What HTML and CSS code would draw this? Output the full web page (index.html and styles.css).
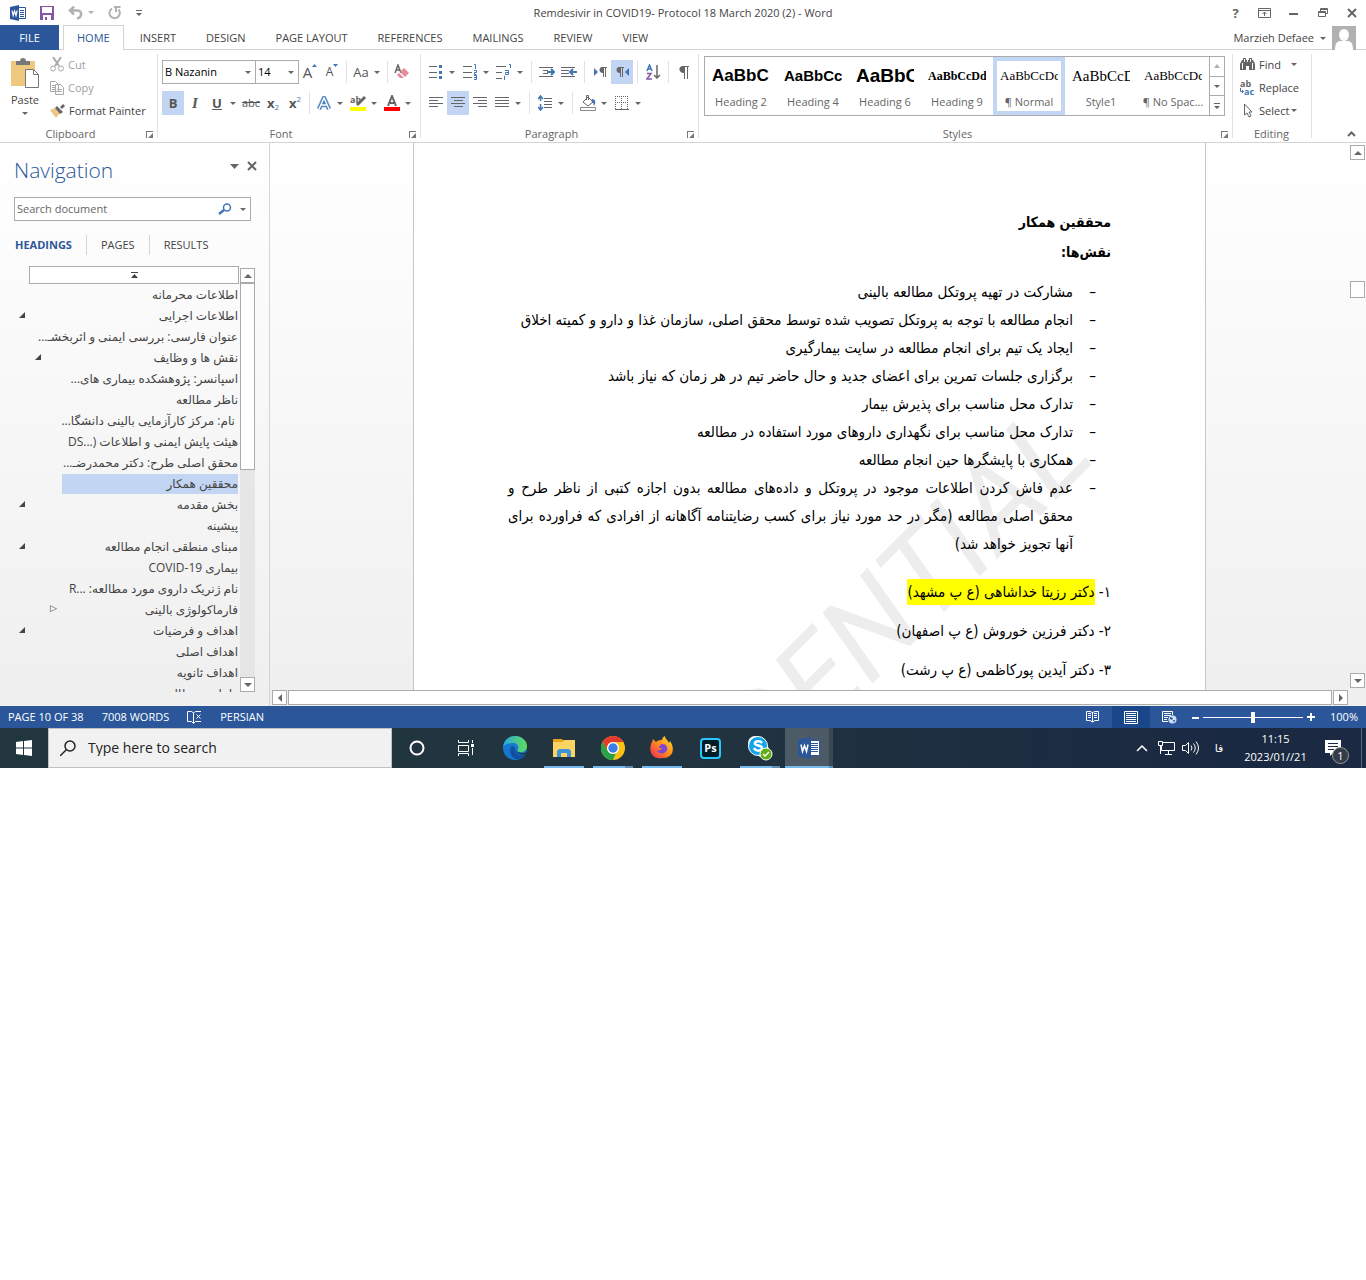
FILE: index.html
```html
<!DOCTYPE html>
<html lang="en">
<head>
    <meta charset="UTF-8">
    <meta name="viewport" content="width=device-width, initial-scale=1.0">
    <title>Remdesivir in COVID19- Protocol 18 March 2020 (2) - Word</title>
    <link rel="stylesheet" href="styles.css">
</head>
<body>
<div class="desktop">
    <header class="titlebar">
        <div class="quick">
            <svg class="word-logo" width="16" height="16" viewBox="0 0 16 16"><path fill="#fff" stroke="#2b579a" d="M8 2.500h7.500v11H8z"/><path stroke="#2b579a" d="M10 5.500h4M10 7.500h4M10 9.500h4M10 11.500h4"/><path fill="#2b579a" d="M0 2l9-2v16l-9-2z"/><path fill="none" stroke="#fff" stroke-width="1.200" d="M2 5.500l1.200 5L4.600 6 6 10.500l1.200-5"/></svg>
            <button class="icon-btn" aria-label="Save"><svg width="14" height="14" viewBox="0 0 14 14"><path fill="#8657a5" d="M0 0h14v14H0z"/><path fill="#fff" d="M2 1h10v6H2zM3 9h8v5H3z"/><path fill="#8657a5" d="M5 11h2v3H5z"/></svg></button>
            <button class="icon-btn undo" aria-label="Undo"><svg width="16" height="14" viewBox="0 0 16 14"><path fill="none" stroke="#b1b1b1" stroke-width="2.500" d="M2 4.500h7c6 0 5 7 0 8M6 .5l-4 4 4 4"/></svg><i class="arrow pale"></i></button>
            <button class="icon-btn" aria-label="Repeat"><svg width="14" height="14" viewBox="0 0 14 14"><path fill="none" stroke="#b1b1b1" stroke-width="2" d="M4 2.500a5.200 5.200 0 1 0 6.500 1M6 1h6.500M8 1v5"/></svg></button>
            <button class="icon-btn" aria-label="Customize toolbar"><svg width="6" height="6" viewBox="0 0 6 6"><path fill="#666" d="M0 0h6v1H0zM0 3h6L3 6z"/></svg></button>
        </div>
        <h1>Remdesivir in COVID19- Protocol 18 March 2020 (2) - Word</h1>
        <div class="window-controls">
            <button aria-label="Help"><b>?</b></button>
            <button aria-label="Ribbon display"><svg width="13" height="10" viewBox="0 0 13 10"><path fill="none" stroke="#666" d="M.5.500h12v9H.500zM1 2.500h11M6.500 8V4M4.500 6l2-2 2 2"/></svg></button>
            <button aria-label="Minimize"><svg width="9" height="10"><path fill="#666" d="M0 5h9v2H0z"/></svg></button>
            <button aria-label="Restore"><svg width="10" height="9" viewBox="0 0 10 9"><path fill="none" stroke="#666" d="M.5 3.500h7v5h-7zM.5 4.500h7M2.500 3V.500h7v5H8M2.500 1.500h7"/></svg></button>
            <button aria-label="Close"><svg width="10" height="10" viewBox="0 0 10 10"><path stroke="#666" stroke-width="2" d="M1 1l8 8M9 1L1 9"/></svg></button>
        </div>
    </header>

    <nav class="ribbon-tabs">
        <button class="file">FILE</button>
        <button class="active">HOME</button>
        <button>INSERT</button>
        <button>DESIGN</button>
        <button>PAGE LAYOUT</button>
        <button>REFERENCES</button>
        <button>MAILINGS</button>
        <button>REVIEW</button>
        <button>VIEW</button>
        <button class="account">Marzieh Defaee <i class="arrow"></i>
            <svg width="24" height="24" viewBox="0 0 24 24"><path fill="#b1b1b1" d="M0 0h24v24H0z"/><ellipse cx="12" cy="9" rx="5" ry="6" fill="#fff"/><path fill="#fff" d="M3 24c0-7 2-9 6-9h6c4 0 6 2 6 9z"/></svg>
        </button>
    </nav>

    <section class="ribbon">
        <div class="group clipboard">
            <div class="group-body">
                <button class="paste">
                    <svg width="28" height="30" viewBox="0 0 28 30"><path fill="#edc87e" d="M0 3h24v25H0z"/><path fill="#777" d="M5 3h4c0-4 6-4 6 0h4v4H5z"/><path fill="#fff" stroke="#777" d="M14.500 11.500h8l5 5v13h-13z"/><path fill="none" stroke="#777" d="M22.500 11.500v5h5"/></svg>
                    <span>Paste</span>
                    <i class="arrow"></i>
                </button>
                <div class="stack">
                    <button class="off"><svg width="14" height="15" viewBox="0 0 14 15"><path fill="none" stroke="#aaa" stroke-width="2" d="M3 0l6 9M11 0L5 9"/><circle cx="3" cy="11.500" r="2.500" fill="none" stroke="#aaa"/><circle cx="11" cy="11.500" r="2.500" fill="none" stroke="#aaa"/></svg>Cut</button>
                    <button class="off"><svg width="14" height="14" viewBox="0 0 14 14"><path fill="#fff" stroke="#aaa" d="M.5.500h5l3 3v7h-8zM2 4.500h3M2 6.500h3M2 8.500h3M5.500 3.500h5l3 3v7h-8zM7 8.500h5M7 10.500h5"/></svg>Copy</button>
                    <button><svg width="15" height="14" viewBox="0 0 15 14"><path fill="#edc87e" d="M0 6l5-2 5 5-4 5z"/><path fill="#666" d="M5 4l2-2 6 6-3 2zM10 3l3-3 2 2-3 3z"/></svg>Format Painter</button>
                </div>
            </div>
            <div class="group-label">Clipboard<button class="launcher" aria-label="Clipboard options"></button></div>
        </div>

        <div class="group font">
            <div class="group-body rows">
                <div class="row">
                    <span class="combo name"><select aria-label="Font"><option>B Nazanin</option></select><i class="arrow"></i></span>
                    <span class="combo size"><select aria-label="Font size"><option>14</option></select><i class="arrow"></i></span>
                    <button class="tool" aria-label="Grow font"><span class="big">A</span><svg class="mark" width="5" height="3"><path fill="#3f77b5" d="M0 3h5L2.500 0z"/></svg></button>
                    <button class="tool" aria-label="Shrink font"><span class="small">A</span><svg class="mark" width="5" height="3"><path fill="#3f77b5" d="M0 0h5L2.500 3z"/></svg></button>
                    <i class="sep"></i>
                    <button class="tool drop" aria-label="Change case"><span>Aa</span><i class="arrow"></i></button>
                    <i class="sep"></i>
                    <button class="tool" aria-label="Clear formatting"><svg width="16" height="16" viewBox="0 0 16 16"><path fill="none" stroke="#666" stroke-width="1.500" d="M1 9l3-8 3 8M2 6h4"/><path fill="#e58b9b" d="M10 4l5 5-4 4-5-5z"/><path fill="#e58b9b" d="M5 9l5 5H6l-3-3z"/></svg></button>
                </div>
                <div class="row">
                    <button class="tool on"><b>B</b></button>
                    <button class="tool"><em>I</em></button>
                    <button class="tool drop"><b><u>U</u></b><i class="arrow"></i></button>
                    <button class="tool"><s>abc</s></button>
                    <button class="tool" aria-label="Subscript"><b>x</b><span class="sub">2</span></button>
                    <button class="tool" aria-label="Superscript"><b>x</b><span class="sup">2</span></button>
                    <i class="sep"></i>
                    <button class="tool drop" aria-label="Text effects"><svg width="14" height="15" viewBox="0 0 14 15"><path fill="none" stroke="#a9c6e8" stroke-width="5" d="M2 13L7 2l5 11M4 9h6"/><path fill="none" stroke="#3f77b5" stroke-width="3.500" d="M2 13L7 2l5 11M4 9h6"/><path fill="none" stroke="#fff" stroke-width="1.500" d="M2 13L7 2l5 11M4 9h6"/></svg><i class="arrow"></i></button>
                    <button class="tool drop" aria-label="Highlight"><svg width="17" height="16" viewBox="0 0 17 16"><text x="0" y="8" class="ico-ab">ab</text><path stroke="#666" stroke-width="3" d="M15 2L7 10"/><path fill="#ff0" d="M0 12h16v4H0z"/></svg><i class="arrow"></i></button>
                    <button class="tool drop" aria-label="Font color"><svg width="16" height="16" viewBox="0 0 16 16"><path fill="none" stroke="#666" stroke-width="2" d="M4 11L8 1l4 10M5 8h6"/><path fill="#f00" d="M0 12h16v4H0z"/></svg><i class="arrow"></i></button>
                </div>
            </div>
            <div class="group-label">Font<button class="launcher" aria-label="Font options"></button></div>
        </div>

        <div class="group para">
            <div class="group-body rows">
                <div class="row">
                    <button class="tool drop" aria-label="Bullets"><svg width="14" height="16"><path stroke="#666" d="M0 2.500h8M0 8.500h8M0 13.500h8"/><path fill="#3f77b5" d="M10 1h3v3h-3zM10 7h3v3h-3zM10 12h3v3h-3z"/></svg><i class="arrow"></i></button>
                    <button class="tool drop" aria-label="Numbering"><svg width="15" height="16"><path stroke="#666" d="M0 2.500h9M0 8.500h9M0 13.500h9"/><path fill="none" stroke="#3f77b5" d="M11 .5h1.500V5M11 6.500h2.500v2H11.500v2h2M11 11.500h2.500v4H11M11 13.500h2"/></svg><i class="arrow"></i></button>
                    <button class="tool drop" aria-label="Multilevel list"><svg width="16" height="16"><path stroke="#666" d="M0 2.500h10M0 8.500h6M0 14.500h6"/><path fill="none" stroke="#3f77b5" d="M13 .5h1.500V4M9 6.500h3.500v4H9.500v-2h3M8.500 12v4"/></svg><i class="arrow"></i></button>
                    <i class="sep"></i>
                    <button class="tool" aria-label="Decrease indent"><svg width="16" height="12"><path stroke="#666" d="M0 1.500h14M4 4.500h5M4 7.500h5M0 10.500h14"/><path fill="none" stroke="#3f77b5" stroke-width="2" d="M8 6h7M12 3l3 3-3 3"/></svg></button>
                    <button class="tool" aria-label="Increase indent"><svg width="16" height="12"><path stroke="#666" d="M0 1.500h14M0 4.500h8M0 7.500h8M0 10.500h14"/><path fill="none" stroke="#3f77b5" stroke-width="2" d="M9 6h7M12 3L9 6l3 3"/></svg></button>
                    <i class="sep"></i>
                    <button class="tool" aria-label="Left to right"><svg width="13" height="10"><path fill="#3f77b5" d="M0 1l4 4-4 4z"/><path fill="#666" d="M8 0h5v1h-1v9h-1V1h-1v9H9V6C4 6 5 0 8 0z"/></svg></button>
                    <button class="tool on" aria-label="Right to left"><svg width="13" height="10"><path fill="#3f77b5" d="M13 1L9 5l4 4z"/><path fill="#666" d="M3 0h5v1H7v9H6V1H5v9H4V6C-1 6 0 0 3 0z"/></svg></button>
                    <i class="sep"></i>
                    <button class="tool" aria-label="Sort"><svg width="15" height="16"><path fill="none" stroke="#3f77b5" stroke-width="1.500" d="M1 7l2.500-6L6 7M2 5h3"/><path fill="none" stroke="#8657a5" stroke-width="1.500" d="M1 9.500h4L1 15h5"/><path fill="none" stroke="#666" stroke-width="1.500" d="M11 1v13M8 11l3 3 3-3"/></svg></button>
                    <i class="sep"></i>
                    <button class="tool" aria-label="Show marks"><svg width="10" height="13"><path fill="#666" d="M4 0h6v1H9v12H8V1H6v12H5V7C-1 7-1 0 4 0z"/></svg></button>
                </div>
                <div class="row">
                    <button class="tool" aria-label="Align left"><svg width="14" height="12"><path stroke="#666" d="M0 .5h14M0 3.500h9M0 6.500h14M0 9.500h9"/></svg></button>
                    <button class="tool on" aria-label="Center"><svg width="14" height="12"><path stroke="#666" d="M0 .5h14M3 3.500h9M0 6.500h14M3 9.500h9"/></svg></button>
                    <button class="tool" aria-label="Align right"><svg width="14" height="12"><path stroke="#666" d="M0 .5h14M5 3.500h9M0 6.500h14M5 9.500h9"/></svg></button>
                    <button class="tool drop" aria-label="Justify"><svg width="14" height="12"><path stroke="#666" d="M0 .5h14M0 3.500h14M0 6.500h14M0 9.500h14"/></svg><i class="arrow"></i></button>
                    <i class="sep"></i>
                    <button class="tool drop" aria-label="Line spacing"><svg width="14" height="16"><path stroke="#666" d="M6 3.500h8M6 6.500h8M6 9.500h8M6 12.500h8"/><path fill="none" stroke="#3f77b5" stroke-width="1.500" d="M2.500 1v5M2.500 9v6M0 4l2.500-3L5 4M0 12l2.500 3L5 12"/></svg><i class="arrow"></i></button>
                    <i class="sep"></i>
                    <button class="tool drop" aria-label="Shading"><svg width="17" height="16"><path fill="#fff" stroke="#666" d="M3 7l5-5 5 5-5 4zM6.500 5V.500h2V5"/><path fill="#3f77b5" d="M12 4c4 0 4 4 2 7-1-2 0-4-3-5z"/><path fill="#fff" stroke="#888" d="M.5 12.500h15v3H.500z"/></svg><i class="arrow"></i></button>
                    <button class="tool drop" aria-label="Borders"><svg width="14" height="14"><path fill="none" stroke="#666" stroke-dasharray="1 1" d="M.5 0v13M12.500 0v13M6.500 0v13M0 .5h13M0 6.500h13"/><path stroke="#666" d="M0 13.500h14"/></svg><i class="arrow"></i></button>
                </div>
            </div>
            <div class="group-label">Paragraph<button class="launcher" aria-label="Paragraph options"></button></div>
        </div>

        <div class="group styles">
            <div class="group-body">
                <div class="gallery">
                    <button><span class="sample h2">AaBbC</span><span>Heading 2</span></button>
                    <button><span class="sample h4">AaBbCc</span><span>Heading 4</span></button>
                    <button><span class="sample h6">AaBbC</span><span>Heading 6</span></button>
                    <button><span class="sample h9">AaBbCcDd</span><span>Heading 9</span></button>
                    <button class="selected"><span class="sample">AaBbCcDd</span><span>¶ Normal</span></button>
                    <button><span class="sample s1">AaBbCcD</span><span>Style1</span></button>
                    <button><span class="sample">AaBbCcDd</span><span>¶ No Spac...</span></button>
                    <div class="gallery-nav">
                        <button aria-label="Previous styles"><i class="arrow up pale"></i></button>
                        <button aria-label="Next styles"><i class="arrow"></i></button>
                        <button aria-label="More styles"><svg width="6" height="6" viewBox="0 0 6 6"><path fill="#666" d="M0 0h6v1H0zM0 3h6L3 6z"/></svg></button>
                    </div>
                </div>
            </div>
            <div class="group-label">Styles<button class="launcher" aria-label="Style options"></button></div>
        </div>

        <div class="group editing">
            <div class="group-body">
                <div class="stack">
                    <button><svg width="15" height="13" viewBox="0 0 15 13"><path fill="#666" d="M2 2h1V0h3v2h1v2h1V2h1V0h3v2h1l2 4v6H9V8H6v4H0V6z"/><path stroke="#fff" d="M2.500 5v6M12.500 5v6M4.500 1v3M10.500 1v3"/></svg>Find <i class="arrow"></i></button>
                    <button><svg width="15" height="16" viewBox="0 0 15 16"><text x="0" y="7" class="ico-ab">ab</text><text x="4" y="15" class="ico-ab blue">ac</text><path fill="none" stroke="#3f77b5" d="M.5 8v3.500H3M2 10l1.500 1.500L2 13"/></svg>Replace</button>
                    <button><svg width="15" height="15" viewBox="0 0 15 15"><path fill="#fff" stroke="#666" d="M4.500 1v11l2.500-2 2 4 2-1-2-4h3z"/></svg>Select<i class="arrow tight"></i></button>
                </div>
            </div>
            <div class="group-label">Editing</div>
        </div>
        <button class="collapse" aria-label="Collapse ribbon"><svg width="9" height="6"><path fill="none" stroke="#666" stroke-width="2" d="M1 5l3.500-3.500L8 5"/></svg></button>
    </section>

    <main class="workspace">
        <aside class="nav-pane">
            <div class="nav-head">
                <h2>Navigation</h2>
                <button aria-label="Pane options"><svg width="9" height="5"><path fill="#666" d="M0 0h9L4.500 5z"/></svg></button>
                <button aria-label="Close pane"><svg width="10" height="10"><path stroke="#666" stroke-width="2" d="M1 1l8 8M9 1L1 9"/></svg></button>
            </div>
            <div class="nav-search">
                <input type="text" placeholder="Search document" aria-label="Search document">
                <svg width="14" height="12" viewBox="0 0 14 12"><circle cx="9" cy="4.500" r="3.500" fill="none" stroke="#3f77b5" stroke-width="1.500"/><path stroke="#3f77b5" stroke-width="2.500" d="M6 7l-5 4"/></svg>
                <i class="arrow"></i>
            </div>
            <div class="nav-tabs">
                <button class="active">HEADINGS</button>
                <button>PAGES</button>
                <button>RESULTS</button>
            </div>
            <div class="nav-body">
                <div class="tree">
                    <button class="jump" aria-label="Jump to the beginning"><svg width="7" height="7"><path fill="#444" d="M0 0h7v1H0zM0 6l3.500-4L7 6z"/></svg></button>
                    <ul dir="rtl" lang="fa">
                        <li>اطلاعات محرمانه</li>
                        <li class="open">اطلاعات اجرایی</li>
                        <li>عنوان فارسی: بررسی ایمنی و اثربخشـ...</li>
                        <li class="open l2">نقش ها و وظایف</li>
                        <li>اسپانسر: پژوهشکده بیماری های...</li>
                        <li>ناظر مطالعه</li>
                        <li>&nbsp;نام: مرکز کارآزمایی بالینی دانشگا...</li>
                        <li>هیئت پایش ایمنی و اطلاعات (...DS</li>
                        <li>محقق اصلی طرح: دکتر محمدرضـ...</li>
                        <li class="selected">محققین همکار</li>
                        <li class="open">بخش مقدمه</li>
                        <li>پیشینه</li>
                        <li class="open">مبنای منطقی انجام مطالعه</li>
                        <li>بیماری COVID-19</li>
                        <li>نام ژنریک داروی مورد مطالعه: ...R</li>
                        <li class="closed">فارماکولوژی بالینی</li>
                        <li class="open">اهداف و فرضیات</li>
                        <li>اهداف اصلی</li>
                        <li>اهداف ثانویه</li>
                        <li>طراحی مطالعه</li>
                    </ul>
                </div>
                <div class="scroll-y">
                    <button aria-label="Scroll up"><i class="arrow up"></i></button>
                    <div class="thumb"></div>
                    <button class="end" aria-label="Scroll down"><i class="arrow"></i></button>
                </div>
            </div>
        </aside>

        <div class="editor">
            <div class="viewport">
                <article class="page" dir="rtl" lang="fa">
                    <div class="watermark" dir="ltr">CONFIDENTIAL</div>
                    <h3>محققین همکار</h3>
                    <h3>نقش‌ها:</h3>
                    <ul class="roles">
                        <li>مشارکت در تهیه پروتکل مطالعه بالینی</li>
                        <li>انجام مطالعه با توجه به پروتکل تصویب شده توسط محقق اصلی، سازمان غذا و دارو و کمیته اخلاق</li>
                        <li>ایجاد یک تیم برای انجام مطالعه در سایت بیمارگیری</li>
                        <li>برگزاری جلسات تمرین برای اعضای جدید و حال حاضر تیم در هر زمان که نیاز باشد</li>
                        <li>تدارک محل مناسب برای پذیرش بیمار</li>
                        <li>تدارک محل مناسب برای نگهداری داروهای مورد استفاده در مطالعه</li>
                        <li>همکاری با پایشگرها حین انجام مطالعه</li>
                        <li>
                            <span class="full">عدم فاش کردن اطلاعات موجود در پروتکل و داده‌های مطالعه بدون اجازه کتبی از ناظر طرح و</span>
                            <span class="full">محقق اصلی مطالعه (مگر در حد مورد نیاز برای کسب رضایتنامه آگاهانه از افرادی که فراورده برای</span>
                            آنها تجویز خواهد شد)
                        </li>
                    </ul>
                    <p class="person">۱- <mark>دکتر رزیتا خداشاهی (ع پ مشهد)</mark></p>
                    <p class="person">۲- دکتر فرزین خوروش (ع پ اصفهان)</p>
                    <p class="person">۳- دکتر آیدین پورکاظمی (ع پ رشت)</p>
                </article>
            </div>
            <div class="scroll-y main">
                <button aria-label="Scroll up"><i class="arrow up"></i></button>
                <div class="thumb"></div>
                <button class="end" aria-label="Scroll down"><i class="arrow"></i></button>
            </div>
            <div class="scroll-x">
                <button aria-label="Scroll left"><i class="arrow left"></i></button>
                <div class="thumb"></div>
                <button aria-label="Scroll right"><i class="arrow right"></i></button>
            </div>
        </div>
    </main>

    <footer class="status">
        <span>PAGE 10 OF 38</span>
        <span>7008 WORDS</span>
        <svg width="15" height="13" viewBox="0 0 15 13"><path fill="none" stroke="#fff" d="M6.500 12V2L4.500.500h-4v10h4l2 2 2-2H14M6.500 2l2-1.500H14M9.500 3.500l4 4M13.500 3.500l-4 4"/></svg>
        <span>PERSIAN</span>
        <div class="views">
            <button aria-label="Read mode"><svg width="14" height="12"><path fill="none" stroke="#fff" d="M6.500 1.500L4 .5H.500v9H4l2.500 1.500L9 9.500h3.500v-9H9zM6.500 1v10M2 2.500h3M2 4.500h3M2 6.500h3M8 2.500h3M8 4.500h3M8 6.500h3"/></svg></button>
            <button class="on" aria-label="Print layout"><svg width="14" height="13"><path fill="none" stroke="#fff" d="M.5.500h13v12H.500zM2 2.500h10M2 4.500h10M2 6.500h10M2 8.500h10M2 10.500h10"/></svg></button>
            <button aria-label="Web layout"><svg width="15" height="13"><path fill="none" stroke="#fff" d="M6 10.500H.500v-10h10V4M2 2.500h7M2 4.500h7M2 6.500h4M2 8.500h3"/><circle cx="10.500" cy="8.500" r="4" fill="#cfe0f5"/><path fill="#2b579a" d="M8 6l3 1-1 2-2-1zM11 9l2 0-1 3z"/></svg></button>
        </div>
        <div class="zoom">
            <button aria-label="Zoom out"><svg width="7" height="7"><path fill="#fff" d="M0 3h7v2H0z"/></svg></button>
            <input type="range" min="0" max="100" value="50" aria-label="Zoom">
            <button aria-label="Zoom in"><svg width="8" height="8"><path fill="#fff" d="M0 3h3V0h2v3h3v2H5v3H3V5H0z"/></svg></button>
        </div>
        <span class="percent">100%</span>
    </footer>

    <div class="taskbar">
        <button class="start" aria-label="Start"><svg width="16" height="16" viewBox="0 0 16 16"><path fill="#fff" d="M0 2l7-1v6.500H0zM8 1l8-1v7.500H8zM0 8.500h7V15l-7-1zM8 8.500h8V16l-8-1z"/></svg></button>
        <label class="task-search">
            <svg width="16" height="16" viewBox="0 0 16 16"><circle cx="10" cy="6" r="5" fill="none" stroke="#222" stroke-width="1.500"/><path stroke="#222" stroke-width="1.500" d="M6.500 9.500L0 16"/></svg>
            <input type="text" placeholder="Type here to search" aria-label="Type here to search">
        </label>
        <div class="apps">
            <button aria-label="Cortana"><svg width="16" height="16"><circle cx="8" cy="8" r="6.500" fill="none" stroke="#fff" stroke-width="2"/></svg></button>
            <button aria-label="Task view"><svg width="16" height="16"><path fill="none" stroke="#fff" d="M.5 0v2.500h10V0M.5 5.500h10v6H.500zM.5 16v-2.500h10V16M14.500 0v3M14.500 8v7"/><path fill="#fff" d="M13 4h3v3h-3z"/></svg></button>
            <button aria-label="Edge"><svg width="24" height="24" viewBox="0 0 24 24"><defs><linearGradient id="edge-top"><stop offset="0" stop-color="#2aa9e0"/><stop offset="1" stop-color="#5fdc5a"/></linearGradient></defs><circle cx="12" cy="12" r="12" fill="#1478d0"/><path fill="url(#edge-top)" d="M0 11C1 4 6 0 12 0c7 0 12 5 12 10 0 4-3 6-6 6-4 0-4-1-3-3 1-3-1-6-5-6C5 7 1 9 0 11z"/><path fill="#1150a0" d="M9 10c-4 3-2 12 5 13.500 4 0 7-2 9-5-5 2-11 0-11-5 0-2-1-3-3-3.500z"/><path fill="#21343f" d="M12.500 12c0 4 5 7 10.500 4v2c-4 2-11 0-10.500-6z"/></svg></button>
            <button class="running" aria-label="File Explorer"><svg width="22" height="18" viewBox="0 0 22 18"><path fill="#e8a317" d="M0 0h9l2 2v3H0z"/><path fill="#fcd462" d="M0 3h9l2-2h11v17H0z"/><path fill="#3f93d8" d="M4 18v-6l2-2h10l2 2v6h-4v-4H8v4z"/></svg></button>
            <button class="running multi" aria-label="Chrome"><svg width="24" height="24" viewBox="0 0 24 24"><circle cx="12" cy="12" r="12" fill="#fbc116"/><path fill="#e33b2e" d="M1.600 6A12 12 0 0 1 22.400 6H12a6 6 0 0 0-5.200 9z"/><path fill="#28a148" d="M1.600 6l5.200 9a6 6 0 0 0 8 2.300L12 24A12 12 0 0 1 1.600 6z"/><circle cx="12" cy="12" r="6" fill="#fff"/><circle cx="12" cy="12" r="4.700" fill="#3b7de9"/></svg></button>
            <button class="running" aria-label="Firefox"><svg width="24" height="24" viewBox="0 0 24 24"><defs><linearGradient id="fox" x1="1" y1="0" x2="0" y2="1"><stop offset="0" stop-color="#ffe226"/><stop offset=".5" stop-color="#ff8a1e"/><stop offset="1" stop-color="#f0245c"/></linearGradient></defs><path fill="url(#fox)" d="M2 6l1-3 3 3c2-2 5-2 6-2 0-2 1-3 3-4 0 3 3 4 4 7l1-2c5 7 4 17-8 17C1 24-2 13 2 6z"/><path fill="#7e45d6" d="M12 8c4 0 6 3 5 6-2 5-9 4-10 0 2 1 4 0 5-2H9c0-2 1-3 3-4z"/></svg></button>
            <button aria-label="Photoshop"><span class="ps">Ps</span></button>
            <button class="running multi" aria-label="Skype"><svg width="26" height="26" viewBox="0 0 26 26"><circle cx="8" cy="8" r="7" fill="#fff"/><circle cx="15" cy="15" r="7" fill="#fff"/><circle cx="11" cy="11" r="9.500" fill="#12a5e8" stroke="#fff"/><path fill="none" stroke="#fff" stroke-width="2.500" d="M15 8c-2-3-8-2-7 1 1 2 7 1 7 4s-6 4-8 0"/><circle cx="19" cy="19" r="6" fill="#5fae12" stroke="#fff"/><path fill="none" stroke="#fff" stroke-width="1.500" d="M16 19l2 2 4-4"/></svg></button>
            <button class="running multi current" aria-label="Word"><svg width="22" height="22" viewBox="0 0 22 22"><path fill="#fff" stroke="#2b579a" d="M11 3.500h10.500v15H11z"/><path stroke="#2b579a" d="M13 6.500h7M13 8.500h7M13 10.500h7M13 12.500h7M13 14.500h7"/><path fill="#2b579a" d="M0 2.500L13 0v22L0 19.500z"/><path fill="none" stroke="#fff" stroke-width="1.500" d="M3 7.500l1.500 7 2-6 2 6 1.500-7"/></svg></button>
        </div>
        <div class="tray">
            <button aria-label="Hidden icons"><svg width="12" height="7"><path fill="none" stroke="#fff" stroke-width="1.500" d="M1 6l5-5 5 5"/></svg></button>
            <button aria-label="Network"><svg width="17" height="14"><path fill="none" stroke="#fff" d="M5 1.500h11.500v8H3.500V5M.5.500h4v4h-4zM2.500 5v8M10.500 10v3M7 13.500h7"/></svg></button>
            <button aria-label="Volume"><svg width="17" height="14"><path fill="none" stroke="#fff" d="M.5 4.500h3l3-3v11l-3-3h-3zM9 4.500q2 2.500 0 5M11.500 2.500q3.500 4.500 0 9M14 .5q5 6.500 0 13"/></svg></button>
            <button class="lang" lang="fa">فا</button>
            <div class="clock"><span>11:15</span><span>2023/01//21</span></div>
            <button class="notes" aria-label="Notifications"><svg width="16" height="16"><path fill="#fff" d="M0 0h16v13H8l-3 3v-3H0z"/><path stroke="#1b2a40" d="M3 3.500h10M3 6.500h10M3 9.500h6"/></svg><span class="badge">1</span></button>
        </div>
    </div>
</div>
</body>
</html>
```
FILE: styles.css
```css
* {
    box-sizing: border-box;
}
body {
    margin: 0;
    background-color: #fff;
    color: #444;
    font-family: "Open Sans", "DejaVu Sans", sans-serif;
    font-size: 11px;
    line-height: 16px;
}
button, input, select {
    margin: 0;
    padding: 0;
    border: none;
    background: none;
    color: inherit;
    font: inherit;
}
button {
    display: flex;
    align-items: center;
    justify-content: center;
    white-space: nowrap;
}
h1, h2, h3, p, ul {
    margin: 0;
    padding: 0;
    font-weight: normal;
}
ul {
    list-style: none;
}
svg {
    display: block;
    flex: none;
}
.desktop {
    display: flex;
    flex-direction: column;
    height: 60vh;
    min-height: 640px;
}
.arrow {
    flex: none;
    border: 3px solid transparent;
    border-top-color: #666;
    border-bottom: none;
}
.arrow.up {
    border-top: none;
    border-bottom: 4px solid #666;
}
.arrow.left {
    border: 4px solid transparent;
    border-right-color: #666;
    border-left: none;
}
.arrow.right {
    border: 4px solid transparent;
    border-left-color: #666;
    border-right: none;
}
.arrow.pale {
    border-top-color: #b1b1b1;
    border-bottom-color: #b1b1b1;
}

/* title bar */
.titlebar {
    display: grid;
    grid-template-columns: 1fr auto 1fr;
    align-items: center;
    height: 25px;
}
.quick {
    display: flex;
    align-items: center;
    gap: 14px;
    height: 22px;
    padding-left: 10px;
}
.undo {
    gap: 4px;
}
.titlebar h1 {
    font-size: 11px;
}
.window-controls {
    display: flex;
    justify-content: flex-end;
    height: 22px;
}
.window-controls button {
    width: 29px;
}
.window-controls b {
    font-size: 13px;
    color: #666;
}

/* ribbon tabs */
.ribbon-tabs {
    display: flex;
    height: 25px;
    border-bottom: 1px solid #d4d4d4;
}
.ribbon-tabs button {
    height: 25px;
    padding: 0 14px;
    border: 1px solid transparent;
    border-bottom: none;
}
.ribbon-tabs .file {
    width: 59px;
    margin-right: 4px;
    background-color: #2b579a;
    color: #fff;
}
.ribbon-tabs .active {
    margin-right: 1px;
    padding: 0 13px;
    border-color: #d4d4d4;
    background-color: #fff;
    color: #2b579a;
}
.ribbon-tabs .account {
    gap: 6px;
    margin-left: auto;
    padding: 0 9px;
}

/* ribbon */
.ribbon {
    display: flex;
    height: 93px;
    padding: 4px 0;
    border-bottom: 1px solid #d4d4d4;
}
.group {
    display: flex;
    flex-direction: column;
    flex: none;
    border-right: 1px solid #e1e1e1;
}
.group-body {
    display: flex;
    flex: 1;
}
.group-label {
    position: relative;
    height: 14px;
    padding-right: 16px;
    line-height: 20px;
    text-align: center;
    color: #666;
}
.launcher {
    position: absolute;
    right: 4px;
    bottom: 0;
    width: 7px;
    height: 7px;
    border-top: 1px solid #777;
    border-left: 1px solid #777;
}
.launcher::after {
    content: "";
    border-left: 5px solid transparent;
    border-bottom: 5px solid #777;
}
.clipboard {
    width: 158px;
}
.paste {
    flex-direction: column;
    justify-content: flex-start;
    gap: 4px;
    width: 50px;
    padding-top: 4px;
}
.stack {
    display: flex;
    flex-direction: column;
    margin-top: -1px;
}
.stack button {
    justify-content: flex-start;
    gap: 4px;
    height: 23px;
}
.stack .off {
    color: #a0a0a0;
}
.rows {
    flex-direction: column;
    gap: 7px;
    padding: 6px 0 0 4px;
}
.row {
    display: flex;
    align-items: center;
    height: 24px;
}
.font {
    width: 263px;
}
.para {
    width: 278px;
}
.combo {
    display: flex;
    align-items: center;
    height: 24px;
    padding-right: 4px;
    border: 1px solid #ababab;
    color: #000;
}
.combo select {
    appearance: none;
    flex: 1;
    padding-left: 2px;
}
.combo.name {
    width: 94px;
}
.combo.size {
    width: 43px;
    border-left: none;
}
.tool {
    position: relative;
    flex: none;
    width: 22px;
    height: 24px;
    font-size: 13px;
    color: #555;
}
.tool.drop {
    width: 34px;
    padding-right: 12px;
}
.tool .arrow {
    position: absolute;
    right: 4px;
    top: 11px;
}
.tool.on {
    background-color: #c2d5f2;
}
.tool em {
    font-family: "Liberation Serif", serif;
    font-size: 15px;
    font-weight: bold;
}
.tool s {
    font-size: 11px;
}
.tool .big {
    font-size: 15px;
}
.tool .small {
    font-size: 12px;
}
.mark {
    align-self: flex-start;
    margin-top: 4px;
}
.tool .sub, .tool .sup {
    padding-top: 8px;
    font-size: 8px;
    color: #3f77b5;
}
.tool .sup {
    padding: 0 0 8px;
}
.sep {
    width: 1px;
    height: 22px;
    margin: 0 3px;
    background-color: #e1e1e1;
}
.para .sep {
    margin: 0 4px;
}
.ico-ab {
    font-size: 9px;
    font-weight: bold;
    fill: #666;
}
.ico-ab.blue {
    fill: #3f77b5;
}
.styles {
    flex: 1;
}
.styles .group-body {
    padding: 2px 7px 0 5px;
}
.gallery {
    display: flex;
    flex: 1;
    height: 60px;
    border: 1px solid #ababab;
}
.gallery > button {
    flex: 1;
    flex-direction: column;
    justify-content: flex-start;
    gap: 6px;
    min-width: 0;
    padding-top: 3px;
    border: 4px solid transparent;
    color: #666;
}
.gallery > .selected {
    border-color: #c2d5f2;
}
.sample {
    width: 58px;
    height: 24px;
    overflow: hidden;
    line-height: 24px;
    text-align: left;
    color: #000;
    font-family: "Liberation Serif", serif;
    font-size: 13px;
}
.sample.h2, .sample.h4, .sample.h6 {
    font-family: "Liberation Sans", sans-serif;
    font-weight: bold;
    font-size: 17px;
}
.sample.h4 {
    font-size: 15px;
}
.sample.h6 {
    font-size: 19px;
}
.sample.h9 {
    font-size: 12px;
    font-weight: bold;
}
.sample.s1 {
    font-size: 15px;
}
.gallery-nav {
    display: flex;
    flex-direction: column;
    width: 15px;
    border-left: 1px solid #ababab;
}
.gallery-nav button {
    flex: 1;
}
.gallery-nav button + button {
    border-top: 1px solid #ababab;
}
.editing {
    width: 79px;
    padding-left: 7px;
}
.editing .group-label {
    padding-right: 8px;
}
.editing .stack .arrow {
    margin-left: 6px;
}
.editing .stack .arrow.tight {
    margin-left: -2px;
}
.collapse {
    align-self: flex-end;
    width: 54px;
    height: 8px;
    padding-left: 24px;
}

/* workspace */
.workspace {
    display: flex;
    flex: 1;
    min-height: 0;
    background: linear-gradient(#fff, #efefef);
}
.nav-pane {
    display: flex;
    flex-direction: column;
    width: 270px;
    padding: 12px 14px 14px;
    border-right: 1px solid #d4d4d4;
}
.nav-head {
    display: flex;
    align-items: center;
    gap: 8px;
    height: 30px;
}
.nav-head h2 {
    flex: 1;
    font-size: 21px;
    font-weight: 300;
    line-height: 28px;
    color: #2b579a;
}
.nav-head button {
    height: 22px;
    align-self: flex-start;
}
.nav-head button:last-child {
    margin-right: -2px;
}
.nav-search {
    display: flex;
    align-items: center;
    gap: 8px;
    height: 24px;
    margin: 12px 4px 0 0;
    padding: 0 4px 0 2px;
    border: 1px solid #ababab;
    background-color: #fff;
}
.nav-search input {
    flex: 1;
    min-width: 0;
}
input::placeholder {
    color: #666;
    opacity: 1;
}
.nav-tabs {
    display: flex;
    align-items: center;
    height: 20px;
    margin-top: 14px;
}
.nav-tabs button {
    height: 20px;
    padding: 0 14px;
    border-left: 1px solid #d4d4d4;
}
.nav-tabs .active {
    padding-left: 1px;
    border: none;
    color: #2b579a;
    font-weight: bold;
}
.nav-body {
    display: flex;
    gap: 1px;
    flex: 1;
    min-height: 0;
    margin-top: 11px;
}
.tree {
    flex: 1;
    overflow: hidden;
}
.jump {
    width: calc(100% - 15px);
    height: 18px;
    margin-left: 15px;
    border: 1px solid #ababab;
    background-color: #fff;
}
.tree ul {
    padding: 1px 1px 0 0;
    font-size: 12px;
}
.tree li {
    position: relative;
    height: 20px;
    margin: 0 0 1px 48px;
    line-height: 20px;
    white-space: nowrap;
}
.tree .selected {
    background-color: #c2d5f2;
}
.open::after {
    content: "";
    position: absolute;
    left: -43px;
    top: 6px;
    border-left: 6px solid transparent;
    border-bottom: 6px solid #444;
}
.open.l2::after {
    left: -27px;
}
.closed::after {
    content: "▷";
    position: absolute;
    left: -12px;
    top: -2px;
    font-size: 9px;
}
.scroll-y {
    display: flex;
    flex-direction: column;
    width: 15px;
    margin-top: 2px;
    background-color: #e6e6e6;
}
.scroll-y button, .scroll-x button {
    flex: none;
    width: 15px;
    height: 15px;
    border: 1px solid #ababab;
    background-color: #fff;
}
.scroll-y .arrow, .scroll-x .arrow {
    border-width: 4px;
}
.scroll-y .arrow.up {
    border-top: none;
}
.scroll-y .end .arrow {
    border-bottom: none;
}
.scroll-x .arrow.left {
    border-left: none;
}
.scroll-x .arrow.right {
    border-right: none;
}
.scroll-y .thumb, .scroll-x .thumb {
    height: 44%;
    border: 1px solid #ababab;
    background-color: #fff;
}
.scroll-y .end {
    margin-top: auto;
}
.editor {
    display: grid;
    grid-template-columns: 1fr 17px;
    grid-template-rows: 1fr 16px;
    flex: 1;
    min-width: 0;
}
.viewport {
    min-height: 0;
    overflow: hidden;
}
.scroll-y.main {
    justify-self: center;
    margin: 2px 0;
    background: none;
}
.main .thumb {
    height: 17px;
    margin-top: 121px;
}
.scroll-x {
    display: flex;
    gap: 1px;
    padding: 0 1px 0 2px;
}
.scroll-x .thumb {
    flex: 1;
    height: 15px;
}

/* document */
.page {
    position: relative;
    width: 793px;
    max-width: 100%;
    min-height: 100%;
    margin: 0 auto;
    padding: 64px 94px 0;
    overflow: hidden;
    border: 1px solid #c6c6c6;
    border-width: 0 1px;
    background-color: #fff;
    color: #000;
    font-family: "DejaVu Sans Condensed", "DejaVu Sans", sans-serif;
    font-size: 15px;
    line-height: 30px;
}
.page > :not(.watermark) {
    position: relative;
}
.page h3 {
    font-size: 14px;
    font-weight: bold;
}
.roles {
    margin-top: 11px;
}
.roles li {
    position: relative;
    padding-right: 38px;
    line-height: 28px;
    white-space: nowrap;
}
.roles li::before {
    content: "–";
    position: absolute;
    right: 15px;
}
.full {
    display: block;
    white-space: normal;
    text-align-last: justify;
}
.person {
    line-height: 39px;
}
.roles + .person {
    margin-top: 15px;
}
mark {
    padding: 4px 0;
    background-color: #ff0;
}
.watermark {
    position: absolute;
    left: 47%;
    top: 104%;
    color: #ededed;
    font-family: "Roboto", sans-serif;
    font-size: 120px;
    font-style: italic;
    line-height: 120px;
    transform: translate(-50%, -50%) rotate(-45deg);
}

/* status bar */
.status {
    display: flex;
    align-items: center;
    gap: 18px;
    height: 22px;
    padding: 0 8px;
    background-color: #2b579a;
    color: #fff;
}
.views {
    display: flex;
    margin-left: auto;
}
.views button {
    width: 38px;
    height: 22px;
}
.views .on {
    background-color: #19478a;
}
.zoom {
    display: flex;
    align-items: center;
    margin: 0 -3px 0 -14px;
}
.zoom input {
    appearance: none;
    width: 100px;
    height: 12px;
    margin: 0 4px;
    background: linear-gradient(#fff, #fff) center / 100% 1px no-repeat;
}
.zoom input::-webkit-slider-thumb {
    appearance: none;
    width: 4px;
    height: 11px;
    background-color: #fff;
}

/* taskbar */
.taskbar {
    display: flex;
    height: 40px;
    background: linear-gradient(90deg, #21363f, #21343f 50%, #1a2942 90%, #1b2a42);
    color: #fff;
}
.start {
    width: 48px;
}
.task-search {
    display: flex;
    align-items: center;
    gap: 12px;
    width: 344px;
    padding-left: 11px;
    border: 1px solid #c0c0c0;
    background-color: #f1f1f1;
}
.task-search input {
    flex: 1;
    font-size: 14px;
    color: #222;
}
.task-search input::placeholder {
    color: #222;
}
.apps {
    display: flex;
}
.apps button {
    position: relative;
    width: 49px;
}
.running::after {
    content: "";
    position: absolute;
    left: 5px;
    right: 4px;
    bottom: 0;
    height: 2px;
    background-color: #76b9ed;
}
.multi::after {
    border-right: 8px solid #5d8db8;
}
.apps .current::before {
    content: "";
    position: absolute;
    inset: 0 0 0 1px;
    border-right: 4px solid rgba(0, 0, 0, 0.2);
    background-color: rgba(255, 255, 255, 0.2);
}
.apps .current::after {
    left: 1px;
    right: 0;
    border-right-width: 4px;
}
.current svg {
    position: relative;
}
.ps {
    width: 21px;
    height: 21px;
    border: 2px solid #26c9ff;
    border-radius: 4px;
    background-color: #001d26;
    font-size: 11px;
    font-weight: bold;
    line-height: 16px;
}
.tray {
    display: flex;
    align-items: center;
    margin-left: auto;
    margin-right: 4px;
    border-right: 1px solid #5a6576;
}
.tray button {
    width: 24px;
    height: 40px;
}
.tray .lang {
    width: 34px;
}
.clock {
    display: flex;
    flex-direction: column;
    width: 79px;
    line-height: 18px;
    text-align: center;
}
.tray .notes {
    position: relative;
    width: 46px;
    padding-right: 10px;
}
.badge {
    position: absolute;
    right: 12px;
    bottom: 4px;
    width: 17px;
    height: 17px;
    border: 1px solid #999;
    border-radius: 50%;
    background-color: #333c48;
    line-height: 15px;
}
```
